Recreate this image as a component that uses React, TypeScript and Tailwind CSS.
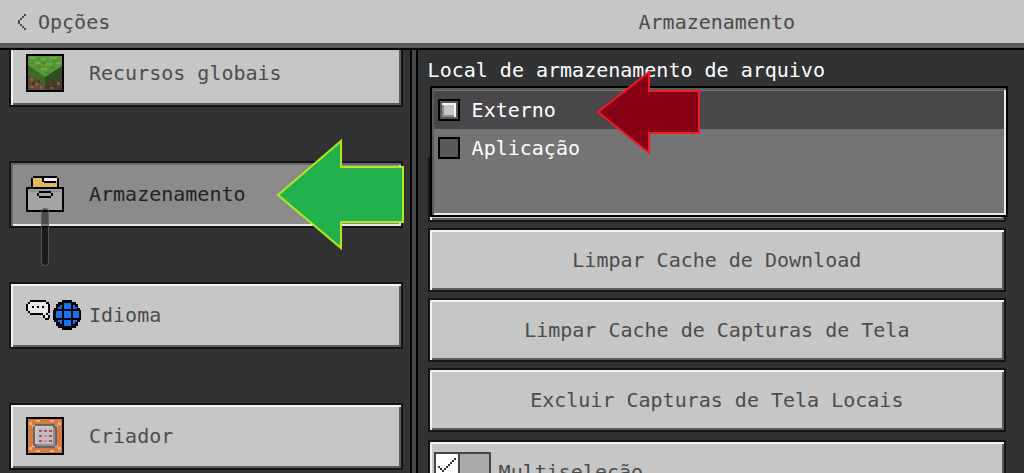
import { useState } from 'react';
import type { ReactNode } from 'react';
import clsx from 'clsx';

const raised = 'bg-[#c6c6c6] text-[#4c4c4c] shadow-[inset_2px_2px_0_#f4f4f4,inset_-2px_-2px_0_#5c5e5e]';
const pressed = 'bg-[#8b8b8b] text-[#222222] shadow-[inset_2px_2px_0_#68686a,inset_-2px_-2px_0_#e6e8e8]';

const BackIcon = () => (
  <svg width="8" height="16" viewBox="0 0 4 8" fill="#4c4c4c" shapeRendering="crispEdges" aria-hidden="true">
    <path d="M3 0h1v1H3zM2 1h1v1H2zM1 2h1v1H1zM0 3h1v2H0zM1 5h1v1H1zM2 6h1v1H2zM3 7h1v1H3z" />
  </svg>
);

const GrassIcon = () => (
  <svg width="38" height="38" viewBox="0 0 38 38" aria-hidden="true">
    <rect width="38" height="38" fill="#000" />
    <rect x="2" y="2" width="34" height="34" fill="#5a9638" />
    <path d="M2 13L19 24V36H2z" fill="#654734" />
    <path d="M19 24L36 13V36H19z" fill="#49382c" />
    <path d="M2 11l17 12v8h-2v-4h-3v3h-3v-6H8v2H5v-4H2z" fill="#3d6b26" />
    <path d="M36 12L19 23v10h2v-5h3v3h2v-6h3v3h3v-5h4z" fill="#2d4e1e" />
    <path d="M4 3h6v2H4zM15 4h5v2h-5zM24 3h7v2h-7zM9 8h5v2H9zM20 9h6v2h-6zM30 8h5v2h-5zM15 14h6v2h-6z" fill="#6dac46" />
    <path d="M11 4h3v2h-3zM4 8h4v2H4zM16 8h4v2h-4zM27 6h4v2h-4zM24 13h5v2h-5zM11 12h4v2h-4zM19 18h4v2h-4z" fill="#4a8b2d" />
    <path d="M4 24h3v3H4zM9 29h3v3H9zM4 32h4v2H4zM14 32h3v3h-3zM24 33h3v2h-3zM31 28h3v3h-3z" fill="#80604b" />
    <path d="M6 28h3v3H6zM12 26h2v3h-2zM27 29h3v3h-3zM32 33h3v2h-3z" fill="#4a362a" />
  </svg>
);

const StorageIcon = () => (
  <svg width="38" height="36" viewBox="0 0 38 36" aria-hidden="true">
    <path d="M7 1h9v2h16v9H6V3h1z" fill="#e5b85a" />
    <path d="M18 2h13v3H18z" fill="#eeeeee" />
    <path d="M7 0h24v2H7zM5 2h2v10H5zM31 2h2v10h-2zM16 2h2v4h-2zM18 5h12v2H18z" fill="#000" />
    <rect x="1" y="12" width="36" height="23" fill="#a4a4a4" stroke="#000" strokeWidth="2" />
    <path d="M3 14h32v2H3z" fill="#929292" />
    <path d="M13 15h12v2H13zM11 17h2v3h-2zM25 17h2v3h-2zM13 20h12v2H13z" fill="#000" />
  </svg>
);

const LanguageIcon = () => (
  <svg width="56" height="30" viewBox="0 0 56 30" aria-hidden="true">
    <path d="M4 2h16v2h2v8h-2v2h2v4h-4v-3H4v-2H2V4h2z" fill="#e8e8e8" />
    <path d="M4 0h16v2H4zM2 2h2v2H2zM0 4h2v7H0zM2 11h2v2H2zM4 13h13v2H4zM20 2h3v2h-3zM22 4h2v9h-2zM17 15h2v3h-2zM19 18h4v2h-4zM22 15h2v3h-2zM20 13h2v2h-2z" fill="#000" />
    <path d="M6 6h2v2H6zM11 6h2v2h-2zM16 6h2v2h-2z" fill="#000" />
    <path d="M36 0h10v2h4v2h2v4h2v2h1v10h-1v2h-2v4h-2v2h-4v2H36v-2h-4v-2h-2v-4h-2v-2h-1V10h1V8h2V4h2V2h4z" fill="#000" />
    <path d="M38 3h7v6h-7zM38 11h7v7h-7zM38 20h7v6h-7zM30 11h6v7h-6zM47 11h6v7h-6zM32 7h2V5h2v4h-4zM47 5h2v2h2v2h-4zM32 20h4v4h-2v-2h-2zM47 20h4v2h-2v2h-2z" fill="#1671f3" />
  </svg>
);

const CommandIcon = () => (
  <svg width="38" height="38" viewBox="0 0 38 38" aria-hidden="true">
    <rect width="38" height="38" fill="#000" />
    <rect x="2" y="2" width="34" height="34" fill="#d47b43" />
    <path d="M3 5h3v3h3v3H6V8H3zM35 5h-3v3h-3v3h3V8h3zM3 33h3v-3h3v-3H6v3H3zM35 33h-3v-3h-3v-3h3v3h3zM10 3h4v2h-4zM24 3h4v2h-4zM10 33h4v2h-4zM24 33h4v2h-4z" fill="#f2ab78" />
    <path d="M9 7h20v2h2v20h-2v2H9v-2H7V9h2z" fill="#696563" />
    <path d="M9 9h18v18H9z" fill="#c7c7cb" />
    <path d="M11 11h18v18H11z" fill="#8f8d91" />
    <path d="M11 11h16v16H11z" fill="#bdbbc1" />
    <path d="M13 13h3v2h-3zM18 13h3v2h-3zM23 13h3v2h-3zM13 18h3v2h-3zM23 18h3v2h-3zM13 23h3v2h-3zM23 23h3v2h-3z" fill="#b84d55" />
    <path d="M18 18h3v2h-3zM18 23h3v2h-3z" fill="#d98b90" />
  </svg>
);

const CheckIcon = () => (
  <svg width="20" height="20" viewBox="0 0 10 10" fill="#333" shapeRendering="crispEdges" aria-hidden="true">
    <path d="M1 6h1v1H1zM2 7h1v1H2zM3 8h1v1H3zM4 7h1v1H4zM5 6h1v1H5zM6 5h1v1H6zM7 4h1v1H7zM8 3h1v1H8zM9 2h1v1H9z" />
  </svg>
);

const sections = [
  { name: 'Recursos globais', icon: <GrassIcon /> },
  { name: 'Armazenamento', icon: <StorageIcon /> },
  { name: 'Idioma', icon: <LanguageIcon /> },
  { name: 'Criador', icon: <CommandIcon /> },
];

const locations = ['Externo', 'Aplicação'];

const actions = [
  'Limpar Cache de Download',
  'Limpar Cache de Capturas de Tela',
  'Excluir Capturas de Tela Locais',
];

type SectionButtonProps = {
  name: string;
  icon: ReactNode;
  active: boolean;
  onClick: () => void;
};

const SectionButton = ({ name, icon, active, onClick }: SectionButtonProps) => (
  <button
    onClick={onClick}
    className={clsx('flex h-[67px] w-full shrink-0 items-center border-2 border-[#141414] pb-[2px] pl-[15px] text-left', active ? pressed : raised)}
  >
    <span className="w-[63px] shrink-0">{icon}</span>
    {name}
  </button>
);

export default function App() {
  const [section, setSection] = useState('Armazenamento');
  const [location, setLocation] = useState('Externo');
  const [multi, setMulti] = useState(true);

  return (
    <div className="flex h-screen flex-col overflow-hidden bg-[#313233] font-['DejaVu_Sans_Mono',monospace] text-xl leading-6">
      <header className="z-10 flex h-[50px] shrink-0 border-b-2 border-black bg-[#c6c6c6] text-[#4c4c4c] shadow-[inset_0_-5px_0_#58585a]">
        <div className="w-2/5 pt-[10px] pl-[18px]">
          <button className="flex items-center gap-3">
            <BackIcon />
            Opções
          </button>
        </div>
        <h1 className="flex-1 pt-[10px] text-center">{section}</h1>
      </header>

      <main className="flex min-h-0 flex-1">
        <nav className="relative w-2/5 pr-[7px] pl-[9px]">
          <div className="-mt-[10px] flex flex-col gap-[54px]">
            {sections.map((s) => (
              <SectionButton key={s.name} name={s.name} icon={s.icon} active={section === s.name} onClick={() => setSection(s.name)} />
            ))}
          </div>
          <div className="absolute top-[158px] left-[41px] h-[58px] w-[8px] rounded-full border border-[#68686a]/70 bg-black/45" />
          <svg className="pointer-events-none absolute top-[89px] right-[5px]" width="129" height="112" viewBox="0 0 129 112" aria-hidden="true">
            <path d="M2 56L65 2V28H127V83H65V109Z" fill="#22b14c" stroke="#b5e61d" strokeWidth="2" />
          </svg>
        </nav>

        <div className="w-2 shrink-0 border-x-2 border-black bg-[#48494a]" />

        <section className="min-w-0 flex-1 pr-[18px] pl-[10px]">
          <h2 className="pt-2 pb-1 text-white">Local de armazenamento de arquivo</h2>

          <div className="relative pt-[71px]">
            <div className={clsx('h-[65px] border-2 border-[#141414]', raised)} />
            <div
              role="radiogroup"
              aria-label="Local de armazenamento de arquivo"
              className="absolute top-0 -right-[2px] left-[2px] h-[131px] border-2 border-black bg-[#747474] text-white shadow-[inset_2px_2px_0_#5a5a5c,inset_-2px_-2px_0_#e6e8e8]"
            >
              <div className="py-[3px] pr-[2px] pl-[2px]">
                {locations.map((name) => (
                  <label
                    key={name}
                    className={clsx('flex h-[38px] items-center gap-3 pl-1', location === name && 'bg-[#49474a]')}
                  >
                    <input
                      type="radio"
                      name="location"
                      checked={location === name}
                      onChange={() => setLocation(name)}
                      className="size-[22px] appearance-none border-2 border-black bg-[#58585a] checked:bg-[#c6c6c6] checked:shadow-[inset_0_0_0_2px_#58585a,inset_-4px_4px_0_#f4f4f4,inset_4px_-4px_0_#8b8b8b]"
                    />
                    {name}
                  </label>
                ))}
              </div>
            </div>
            <svg className="pointer-events-none absolute -top-[16px] left-[168px]" width="106" height="86" viewBox="0 0 106 86" aria-hidden="true">
              <path d="M2 42L53 2V21H103V63H53V83Z" fill="#880015" stroke="#ed1c24" strokeWidth="2" />
            </svg>
          </div>

          <div className="mt-[6px] flex flex-col gap-[6px]">
            {actions.map((name) => (
              <button key={name} className={clsx('h-[64px] border-2 border-[#141414]', raised)}>
                {name}
              </button>
            ))}
          </div>

          <label className={clsx('mt-2 flex h-[64px] items-center border-2 border-[#141414] pl-1', raised)}>
            <input type="checkbox" className="sr-only" checked={multi} onChange={() => setMulti(!multi)} />
            <span className="mr-2 flex h-10 w-[57px] border-2 border-[#444] bg-[#a9a9a9]">
              <span className={clsx('h-full w-[24px] border-[#444]', multi ? 'border-r-2 bg-white' : 'ml-auto border-l-2 bg-[#c6c6c6]')}>
                {multi && <CheckIcon />}
              </span>
            </span>
            Multiseleção
          </label>
        </section>
      </main>
    </div>
  );
}
